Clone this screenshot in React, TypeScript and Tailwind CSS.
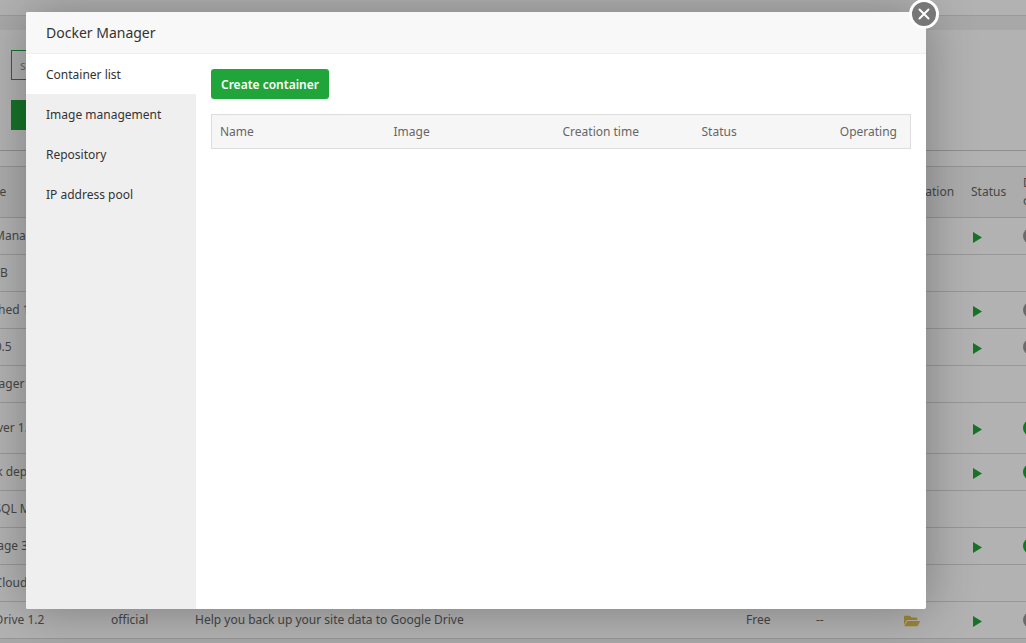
import React from "react";
import clsx from "clsx";
import { FaFolderOpen } from "react-icons/fa";

type Plugin = {
  name: string;
  color: string;
  description?: string;
  installed?: boolean;
  shown?: boolean;
  tall?: boolean;
};

const plugins: Plugin[] = [
  { name: "Docker Manager 3.2", color: "bg-sky-500", installed: true },
  { name: "MongoDB", color: "bg-green-700" },
  { name: "Memcached 1.5", color: "bg-teal-600", installed: true },
  { name: "Redis 5.0.5", color: "bg-red-600", installed: true },
  { name: "SSL Manager 5.3", color: "bg-indigo-500" },
  { name: "DNS Server 1.1", color: "bg-amber-500", installed: true, shown: true, tall: true },
  { name: "One-click deployment", color: "bg-green-600", installed: true, shown: true },
  { name: "PostgreSQL Manager", color: "bg-blue-700" },
  { name: "FTP Storage 3.0", color: "bg-orange-500", installed: true, shown: true },
  { name: "Google Cloud", color: "bg-blue-500" },
  {
    name: "Google Drive 1.2",
    color: "bg-yellow-500",
    description: "Help you back up your site data to Google Drive",
    installed: true,
  },
];

const menu = ["Container list", "Image management", "Repository", "IP address pool"];

function PlayIcon() {
  return (
    <svg viewBox="0 0 9 11" className="block h-[11px] w-[9px] fill-[#20a53a]" aria-hidden="true">
      <path d="M0 0 L9 5.5 L0 11 Z" />
    </svg>
  );
}

function PluginRow({ plugin }: { plugin: Plugin }) {
  const { name, color, description, installed, shown, tall } = plugin;
  return (
    <tr className={clsx("border-b border-[#d8d8d8]", tall ? "h-[51px]" : "h-[37px]")}>
      <td className="px-2 pb-px">
        <div className="flex items-center gap-2.5 whitespace-nowrap">
          <span className={clsx("size-5 rounded-sm", color)} />
          {name}
        </div>
      </td>
      <td className="px-2">official</td>
      <td className="px-2">{description}</td>
      <td className="px-2">Free</td>
      <td className="px-2">--</td>
      <td className="px-2 pt-px">{installed && <FaFolderOpen className="size-4 text-[#e0c04c]" />}</td>
      <td className="pt-[3px] pl-[10px]">{installed && <PlayIcon />}</td>
      <td className="px-[7px]">
        {installed && <span className={clsx("block h-4 w-7 rounded-full", shown ? "bg-[#20a53a]" : "bg-[#999]")} />}
      </td>
    </tr>
  );
}

function AppStore() {
  return (
    <div className="min-h-screen overflow-hidden bg-[#f1f1f1] text-[#666]" inert>
      <div className="h-4 border-b border-[#ddd] bg-white" />
      <main className="mt-[14px] bg-white pt-5">
        <div className="px-[11px]">
          <label htmlFor="plugin-search" className="sr-only">
            Search plugins
          </label>
          <input
            id="plugin-search"
            placeholder="search"
            className="block h-[30px] w-[300px] border border-[#20a53a] px-2 placeholder:text-[#999]"
          />
          <button className="mt-5 block h-[30px] bg-[#20a53a] px-4 text-white">All</button>
        </div>
        <div className="mt-5 h-4 border-t border-[#ccc]" />
        <div className="-mr-[40px] -ml-[87px]">
          <table className="w-full table-fixed border-collapse text-left">
            <colgroup>
              <col className="w-[190px]" />
              <col className="w-[84px]" />
              <col />
              <col className="w-[70px]" />
              <col className="w-[88px]" />
              <col className="w-[67px]" />
              <col className="w-[53px]" />
              <col className="w-[50px]" />
            </colgroup>
            <thead>
              <tr className="h-[51px] border-y border-[#d5d5d5] bg-[#f6f6f6] leading-[18px]">
                <th className="px-2 pb-px font-normal">Software name</th>
                <th className="px-2 pb-px font-normal">Developer</th>
                <th className="px-2 pb-px font-normal">Instructions</th>
                <th className="px-2 pb-px font-normal">Price</th>
                <th className="px-2 pb-px font-normal">Expire date</th>
                <th className="pb-px pl-[10px] font-normal">Location</th>
                <th className="px-2 pb-px font-normal">Status</th>
                <th className="px-[7px] font-normal">
                  Disp
                  <br />
                  on
                </th>
              </tr>
            </thead>
            <tbody>
              {plugins.map((plugin) => (
                <PluginRow key={plugin.name} plugin={plugin} />
              ))}
            </tbody>
          </table>
        </div>
      </main>
    </div>
  );
}

function DockerDialog() {
  return (
    <div
      role="dialog"
      aria-modal="true"
      aria-labelledby="dialog-title"
      className="relative flex h-[597px] w-full flex-col rounded-xs bg-white shadow-[1px_1px_50px_rgba(0,0,0,0.3)]"
    >
      <h1
        id="dialog-title"
        className="flex h-[42px] shrink-0 items-center rounded-t-xs border-b border-[#eee] bg-[#f8f8f8] px-5 text-sm text-[#333]"
      >
        Docker Manager
      </h1>
      <div className="flex flex-1">
        <nav className="w-[170px] shrink-0 rounded-bl-xs bg-[#efefef]">
          {menu.map((item, i) => (
            <a
              key={item}
              href="#"
              className={clsx("flex h-10 items-center px-5 pt-0.5 text-[#333]", i === 0 && "bg-white")}
            >
              {item}
            </a>
          ))}
        </nav>
        <section className="flex-1 p-[15px]">
          <button className="block h-[30px] rounded-[3px] bg-[#20a53a] px-[10px] pt-0.5 font-semibold text-white">
            Create container
          </button>
          <table className="mt-[15px] w-full table-fixed border-collapse border border-[#ddd] text-left text-[#666]">
            <colgroup>
              <col className="w-[174px]" />
              <col className="w-[169px]" />
              <col className="w-[139px]" />
              <col className="w-[106px]" />
              <col />
            </colgroup>
            <thead>
              <tr className="h-[34px] bg-[#f6f6f6]">
                <th className="px-2 pt-px font-normal">Name</th>
                <th className="px-2 pt-px font-normal">Image</th>
                <th className="px-2 pt-px font-normal">Creation time</th>
                <th className="px-2 pt-px font-normal">Status</th>
                <th className="pt-px pr-[13px] text-right font-normal">Operating</th>
              </tr>
            </thead>
          </table>
        </section>
      </div>
      <button
        aria-label="Close"
        className="absolute -top-[13px] -right-[13px] flex size-[30px] items-center justify-center rounded-full border-3 border-white bg-[#777]"
      >
        <svg viewBox="0 0 12 12" className="size-3 stroke-white stroke-2" strokeLinecap="round" aria-hidden="true">
          <path d="M1.5 1.5 L10.5 10.5 M10.5 1.5 L1.5 10.5" />
        </svg>
      </button>
    </div>
  );
}

export default function App() {
  return (
    <div className="relative h-screen overflow-hidden font-['Noto_Sans',sans-serif] text-xs leading-5">
      <AppStore />
      <div className="absolute inset-0 bg-black/30 pt-3 pr-[100px] pl-[26px]">
        <DockerDialog />
      </div>
    </div>
  );
}
